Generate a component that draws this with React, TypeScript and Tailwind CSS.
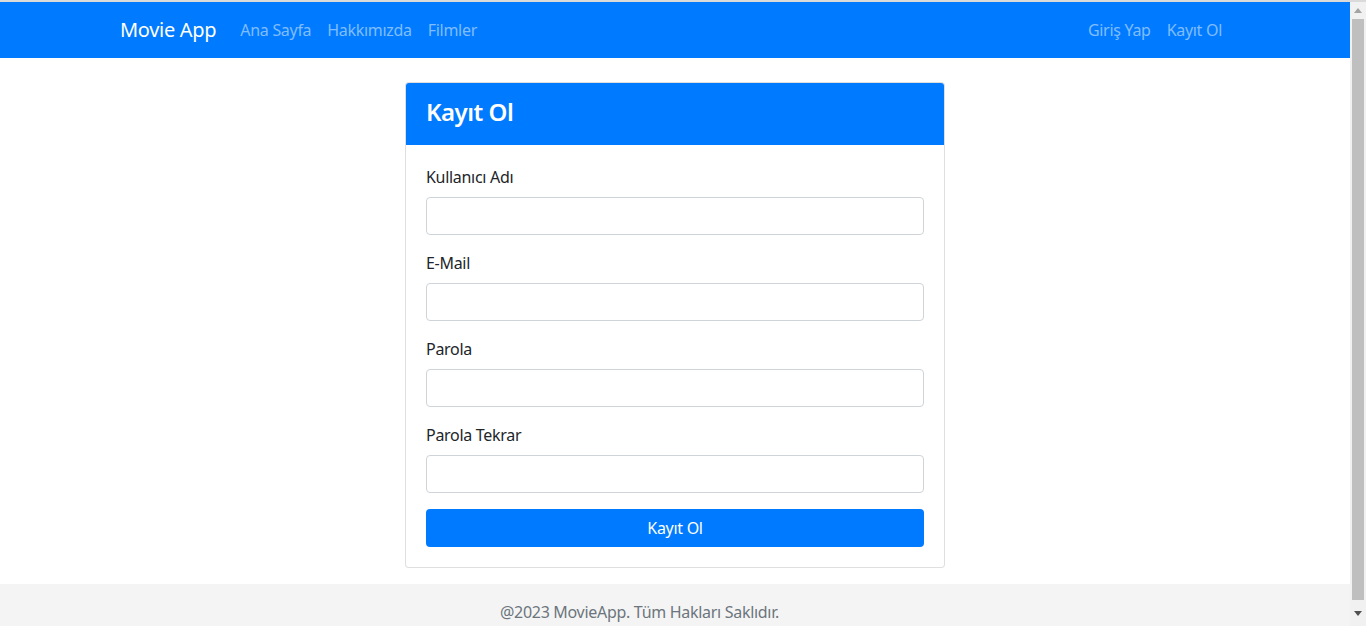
import React from "react";

function Field({ label, type = "text" }: { label: string; type?: string }) {
  return (
    <div className="mb-4">
      <label className="block mb-2 text-[16px] leading-6 text-[#212529] tracking-[-0.3px]">{label}</label>
      <input
        type={type}
        className="block w-full h-[38px] rounded-[4px] border border-[#ced4da] bg-white px-3 text-[16px] outline-none"
      />
    </div>
  );
}

function Scrollbar() {
  return (
    <div className="w-4 h-full bg-[#f1f1f1] flex flex-col items-center">
      <div className="h-[17px] w-full flex items-center justify-center">
        <svg width="8" height="5" viewBox="0 0 8 5"><path d="M4 0L8 5H0Z" fill="#a3a3a3" /></svg>
      </div>
      <div className="w-[12px] flex-1 bg-[#bfbfbf] mx-auto" />
      <div className="h-[26px] w-full flex items-center justify-center">
        <svg width="8" height="5" viewBox="0 0 8 5"><path d="M0 0H8L4 5Z" fill="#505050" /></svg>
      </div>
    </div>
  );
}

export default function App() {
  return (
    <div
      className="h-[626px] overflow-hidden flex flex-col bg-white"
      style={{ fontFamily: '"Noto Sans", "Open Sans", sans-serif' }}
    >
      <div className="h-[2px] bg-[#dadada] shrink-0" />
      <div className="flex flex-1 min-h-0">
        <div className="w-[1350px] shrink-0 overflow-hidden">
          <nav className="bg-[#007bff] h-14">
            <div className="mx-auto w-[1140px] px-[15px] h-full flex items-center tracking-[-0.3px]">
              <a className="text-white text-[20px] mr-4 leading-[30px]">Movie App</a>
              <div className="flex">
                <a className="px-2 text-[16px] text-[#80bdff]">Ana Sayfa</a>
                <a className="px-2 text-[16px] text-[#80bdff]">Hakkımızda</a>
                <a className="px-2 text-[16px] text-[#80bdff]">Filmler</a>
              </div>
              <div className="ml-auto flex">
                <a className="px-2 text-[16px] text-[#80bdff]">Giriş Yap</a>
                <a className="px-2 text-[16px] text-[#80bdff]">Kayıt Ol</a>
              </div>
            </div>
          </nav>
          <main className="mx-auto w-[1140px] pt-6 pb-4 flex justify-center">
            <div className="w-[540px] rounded-[4px] border border-[rgba(0,0,0,0.125)] overflow-hidden bg-white">
              <div className="bg-[#007bff] h-[62px] px-5 pb-[5px] flex items-center">
                <h2 className="text-white text-[24px] font-semibold leading-none tracking-[-0.5px]">Kayıt Ol</h2>
              </div>
              <div className="p-5">
                <Field label="Kullanıcı Adı" />
                <Field label="E-Mail" type="email" />
                <Field label="Parola" type="password" />
                <Field label="Parola Tekrar" type="password" />
                <button className="w-full h-[38px] rounded-[4px] bg-[#007bff] text-white text-[16px] tracking-[-0.3px]">
                  Kayıt Ol
                </button>
              </div>
            </div>
          </main>
          <footer className="bg-[#f4f4f4] h-[80px] pt-[16px]">
            <p className="ml-[500px] text-[16px] leading-6 text-[#6c757d] tracking-[-0.3px]">
              @2023 MovieApp. Tüm Hakları Saklıdır.
            </p>
          </footer>
        </div>
        <Scrollbar />
      </div>
    </div>
  );
}
